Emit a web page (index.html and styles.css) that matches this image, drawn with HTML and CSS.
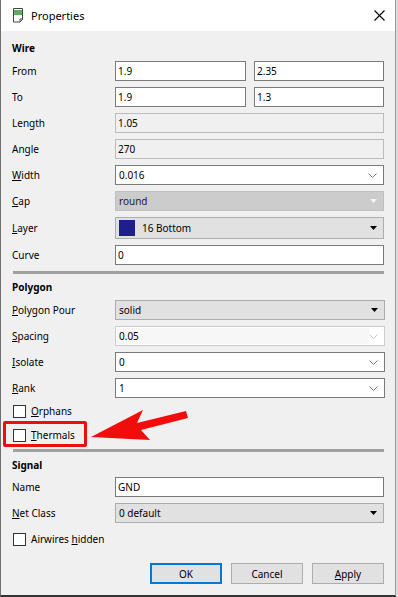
FILE: index.html
```html
<!DOCTYPE html>
<html>

<head>
    <meta charset=utf-8>
    <meta name="viewport" content="width=device-width, initial-scale=1">
    <title>Properties</title>
    <link rel="stylesheet" href="styles.css">
</head>

<body>
    <div class="window">
        <div class="titlebar">
            <svg class="app-icon" width="12" height="16" viewBox="0 0 12 16">
                <path d="M1.5 1.5 h9 v11 l-2.5 2.5 h-6.5 z" fill="#fff" stroke="#444" stroke-width="1" />
                <rect x="2" y="3" width="8" height="5" fill="#5fae5f" />
                <path d="M8 14.5 v-2.5 h2.5" fill="none" stroke="#444" stroke-width="1" />
            </svg>
            <span class="title">Properties</span>
            <svg class="close" width="11" height="11" viewBox="0 0 11 11">
                <path d="M0.5 0.5 L10.5 10.5 M10.5 0.5 L0.5 10.5" stroke="#000" stroke-width="1.1" />
            </svg>
        </div>

        <div class="content">
            <h3 class="group-title">Wire</h3>
            <div class="form">
                <span class="label">From</span>
                <div class="pair">
                    <span class="field">1.9</span>
                    <span class="field">2.35</span>
                </div>
                <span class="label">To</span>
                <div class="pair">
                    <span class="field">1.9</span>
                    <span class="field">1.3</span>
                </div>
                <span class="label">Length</span>
                <span class="field disabled">1.05</span>
                <span class="label">Angle</span>
                <span class="field disabled">270</span>
                <span class="label"><u>W</u>idth</span>
                <span class="field combo">0.016<svg class="chevron" width="9" height="5" viewBox="0 0 9 5"><path d="M0.5 0.5 L4.5 4.5 L8.5 0.5" fill="none" stroke="#777" /></svg></span>
                <span class="label"><u>C</u>ap</span>
                <span class="field combo locked">round<svg class="tri" width="7" height="4" viewBox="0 0 7 4"><path d="M0 0 H7 L3.5 4 z" fill="#f4f4f4" /></svg></span>
                <span class="label"><u>L</u>ayer</span>
                <span class="field combo button layer"><span class="swatch"></span>16 Bottom<svg class="tri" width="7" height="4" viewBox="0 0 7 4"><path d="M0 0 H7 L3.5 4 z" fill="#000" /></svg></span>
                <span class="label">Curve</span>
                <span class="field">0</span>
            </div>

            <div class="separator"></div>

            <h3 class="group-title">Polygon</h3>
            <div class="form">
                <span class="label"><u>P</u>olygon Pour</span>
                <span class="field combo button">solid<svg class="tri" width="7" height="4" viewBox="0 0 7 4"><path d="M0 0 H7 L3.5 4 z" fill="#000" /></svg></span>
                <span class="label"><u>S</u>pacing</span>
                <span class="field combo dim"><span class="dim-text">0.05</span><svg class="chevron" width="9" height="5" viewBox="0 0 9 5"><path d="M0.5 0.5 L4.5 4.5 L8.5 0.5" fill="none" stroke="#c4c4c4" /></svg></span>
                <span class="label"><u>I</u>solate</span>
                <span class="field combo">0<svg class="chevron" width="9" height="5" viewBox="0 0 9 5"><path d="M0.5 0.5 L4.5 4.5 L8.5 0.5" fill="none" stroke="#777" /></svg></span>
                <span class="label"><u>R</u>ank</span>
                <span class="field combo">1<svg class="chevron" width="9" height="5" viewBox="0 0 9 5"><path d="M0.5 0.5 L4.5 4.5 L8.5 0.5" fill="none" stroke="#777" /></svg></span>
            </div>
            <div class="checks">
                <div class="check"><span class="box"></span><span><u>O</u>rphans</span></div>
                <div class="check"><span class="box"></span><span><u>T</u>hermals</span></div>
            </div>

            <div class="separator after-checks"></div>

            <h3 class="group-title tight">Signal</h3>
            <div class="form">
                <span class="label">Name</span>
                <span class="field">GND</span>
                <span class="label"><u>N</u>et Class</span>
                <span class="field combo button">0 default<svg class="tri" width="7" height="4" viewBox="0 0 7 4"><path d="M0 0 H7 L3.5 4 z" fill="#000" /></svg></span>
            </div>
            <div class="checks single">
                <div class="check"><span class="box"></span><span>Airwires <u>h</u>idden</span></div>
            </div>

            <div class="buttons">
                <span class="btn default">OK</span>
                <span class="btn">Cancel</span>
                <span class="btn"><u>A</u>pply</span>
            </div>
        </div>

        <!-- annotation drawn over the dialog -->
        <div class="callout"></div>
        <svg class="arrow" width="398" height="597" viewBox="0 0 398 597">
            <polygon points="91,437 143,410 137,423 186,411 188,418 141,430 150,440" fill="#f20d0d" />
        </svg>
    </div>
</body>

</html>
```

FILE: styles.css
```css
/* Base: the dialog fills the whole window */
html,
body {
    margin: 0;
    padding: 0;
    background: #dcdcdc;
}

body {
    font-family: "Noto Sans", "Open Sans", sans-serif;
    font-size: 10px;
    color: #000;
}

.window {
    position: relative;
    width: 394px;
    height: 595px;
    background: #f0f0f0;
    border-left: 1px solid #707070;
    border-right: 1px solid #9a9a9a;
    border-bottom: 2px solid #333;
    box-sizing: content-box;
    overflow: hidden;
}

/* Title bar */
.titlebar {
    height: 31px;
    background: #fff;
    display: flex;
    align-items: center;
    padding: 0 10px 0 11px;
}

.app-icon {
    margin-right: 7px;
    margin-top: -1px;
}

.title {
    font-size: 11px;
    flex: 1;
}

/* Content */
.content {
    padding: 9px 11px 0 11px;
}

.group-title {
    margin: 0 0 5px 0;
    font-size: 10px;
    font-weight: bold;
    line-height: 16px;
}

.group-title.tight {
    margin-bottom: 4px;
}

.form {
    display: grid;
    grid-template-columns: 103px 1fr;
    row-gap: 6px;
    align-items: center;
}

.label {
    line-height: 20px;
}

.pair {
    display: grid;
    grid-template-columns: 131px 1fr;
    column-gap: 8px;
}

/* Line edits and combo boxes */
.field {
    display: flex;
    align-items: center;
    height: 20px;
    box-sizing: border-box;
    padding: 0 2px;
    border: 1px solid #7a7a7a;
    background: #fff;
    white-space: nowrap;
}

.field.disabled {
    background: #f0f0f0;
    border-color: #bcbcbc;
}

.combo {
    padding-left: 3px;
    padding-right: 6px;
}

.combo svg {
    margin-left: auto;
}

.combo.button {
    background: #e1e1e1;
    border-color: #adadad;
}

.combo.locked {
    background: #cccccc;
    border-color: #bfbfbf;
    color: #222;
}

.combo.layer {
    height: 22px;
    padding-left: 3px;
}

.swatch {
    width: 16px;
    height: 16px;
    background: #1e1e8e;
    margin-right: 7px;
}

.combo.dim {
    border-color: #cccccc;
    padding: 1px 6px 1px 1px;
}

.dim-text {
    align-self: stretch;
    display: flex;
    align-items: center;
    width: 250px;
    padding-left: 2px;
    background: #f7f7f7;
}

/* Checkboxes */
.checks {
    display: flex;
    flex-direction: column;
    gap: 4px;
    margin-top: 3px;
}

.checks.single {
    margin-top: 6px;
}

.check {
    display: flex;
    align-items: center;
    height: 20px;
    gap: 5px;
}

.box {
    width: 13px;
    height: 13px;
    box-sizing: border-box;
    border: 1px solid #333;
    background: #fff;
    margin-left: 1px;
}

/* Group separator */
.separator {
    height: 3px;
    background: #a0a0a0;
    margin: 6px 0 5px 1px;
}

.separator.after-checks {
    margin-top: 4px;
}

/* Dialog buttons */
.buttons {
    display: flex;
    justify-content: flex-end;
    gap: 9px;
    margin-top: 14px;
}

.btn {
    width: 72px;
    height: 21px;
    box-sizing: border-box;
    display: flex;
    align-items: center;
    justify-content: center;
    background: #e1e1e1;
    border: 1px solid #adadad;
}

.btn.default {
    border: 2px solid #0078d7;
}

/* Red annotation */
.callout {
    position: absolute;
    left: 2px;
    top: 421px;
    width: 84px;
    height: 26px;
    box-sizing: border-box;
    border: 3px solid #f20d0d;
    border-radius: 2px;
}

.arrow {
    position: absolute;
    left: -1px;
    top: 0;
}
```
